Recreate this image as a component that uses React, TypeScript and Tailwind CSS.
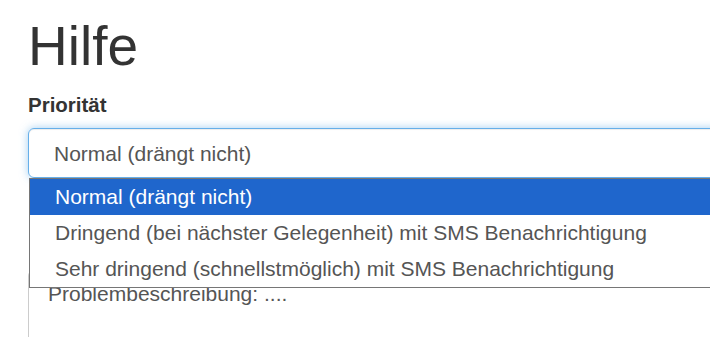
const OPTIONS = [
  "Normal (drängt nicht)",
  "Dringend (bei nächster Gelegenheit) mit SMS Benachrichtigung",
  "Sehr dringend (schnellstmöglich) mit SMS Benachrichtigung",
];

export default function App() {
  return (
    <div
      className="h-[337px] w-full overflow-hidden bg-white pl-[28px]"
      style={{ fontFamily: '"Liberation Sans", Arial, sans-serif' }}
    >
      <h1 className="mt-[14px] text-[55px] leading-[64px] text-[#333]">Hilfe</h1>

      <label className="mt-[13px] block text-[20.5px] font-bold leading-[28px] text-[#333]">
        Priorität
      </label>

      <div className="relative mt-[9px] w-[720px]">
        <div className="flex h-[50px] items-center rounded-[6px] border border-[#66afe9] pl-[25px] pt-[2px] text-[21px] text-[#555] shadow-[inset_0_1px_1px_rgba(0,0,0,0.075),0_0_8px_rgba(102,175,233,0.6)]">
          Normal (drängt nicht)
        </div>

        <ul className="absolute left-[1px] top-[50px] z-10 w-[700px] border border-[#767676] bg-white">
          {OPTIONS.map((opt, i) => (
            <li
              key={opt}
              className={
                i === 0
                  ? "h-[36px] bg-[#1f66cc] pl-[25px] text-[21px] leading-[36px] text-white"
                  : "h-[36px] pl-[25px] text-[21px] leading-[36px] text-[#555]"
              }
            >
              {opt}
            </li>
          ))}
        </ul>
      </div>

      <div className="mt-[92px] h-[120px] w-[720px] rounded-[6px] border border-[#ccc] px-[19px] pt-[8px] text-[21px] leading-[30px] text-[#555]">
        Problembeschreibung: ....
      </div>
    </div>
  );
}
